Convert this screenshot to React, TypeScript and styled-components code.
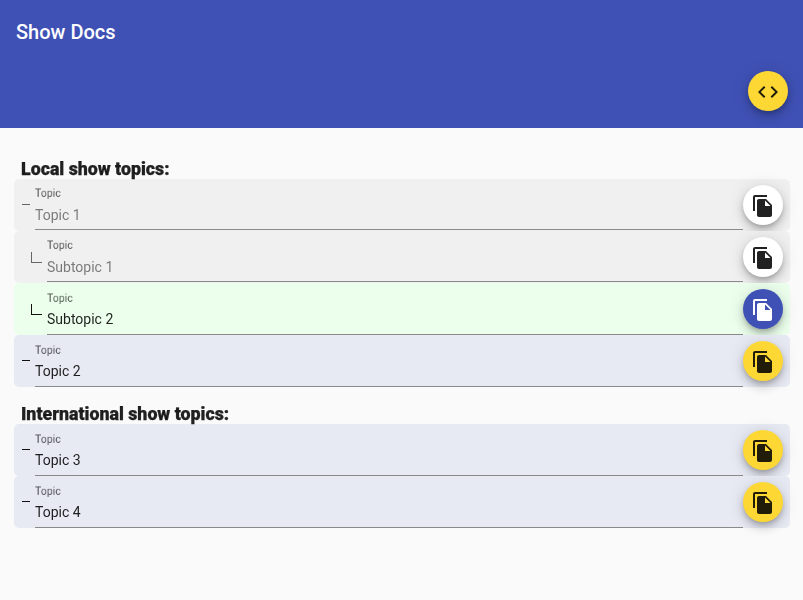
import React from "react";
import styled, { createGlobalStyle } from "styled-components";

type Variant = "disabled" | "active" | "normal";

type Topic = {
  text: string;
  sub?: boolean;
  variant: Variant;
};

const localTopics: Topic[] = [
  { text: "Topic 1", variant: "disabled" },
  { text: "Subtopic 1", sub: true, variant: "disabled" },
  { text: "Subtopic 2", sub: true, variant: "active" },
  { text: "Topic 2", variant: "normal" },
];

const internationalTopics: Topic[] = [
  { text: "Topic 3", variant: "normal" },
  { text: "Topic 4", variant: "normal" },
];

const CopyIcon = () => (
  <svg width="24" height="24" viewBox="0 0 24 24" fill="currentColor">
    <path d="M16 1H4c-1.1 0-2 .9-2 2v14h2V3h12V1zm-1 4l6 6v10c0 1.1-.9 2-2 2H7.99C6.89 23 6 22.1 6 21l.01-14c0-1.1.89-2 1.99-2h7zm-1 7h5.5L14 6.5V12z" />
  </svg>
);

const CodeIcon = () => (
  <svg width="24" height="24" viewBox="0 0 24 24" fill="currentColor">
    <path d="M9.4 16.6L4.8 12l4.6-4.6L8 6l-6 6 6 6 1.4-1.4zm5.2 0l4.6-4.6-4.6-4.6L16 6l6 6-6 6-1.4-1.4z" />
  </svg>
);

const TopicRow = ({ topic }: { topic: Topic }) => (
  <Row $variant={topic.variant}>
    {topic.sub ? <Corner $variant={topic.variant} /> : <Dash $variant={topic.variant} />}
    <Field>
      <FieldLabel>Topic</FieldLabel>
      <FieldValue $variant={topic.variant}>{topic.text}</FieldValue>
    </Field>
    <CopyButton $variant={topic.variant}>
      <CopyIcon />
    </CopyButton>
  </Row>
);

const App = () => {
  return (
    <>
      <GlobalStyle />
      <Header>
        <Title>Show Docs</Title>
        <CodeButton>
          <CodeIcon />
        </CodeButton>
      </Header>
      <Content>
        <SectionTitle>Local show topics:</SectionTitle>
        {localTopics.map((t) => (
          <TopicRow key={t.text} topic={t} />
        ))}
        <SectionTitle>International show topics:</SectionTitle>
        {internationalTopics.map((t) => (
          <TopicRow key={t.text} topic={t} />
        ))}
      </Content>
    </>
  );
};

export default App;

const GlobalStyle = createGlobalStyle`
  html, body {
    margin: 0;
    padding: 0;
    height: 100%;
    background-color: #fafafa;
    font-family: Roboto, "Liberation Sans", sans-serif;
    overflow: hidden;
  }
`;

const Header = styled.header`
  display: flex;
  justify-content: space-between;
  height: 128px;
  padding: 0 15px 0 16px;
  box-sizing: border-box;
  background-color: #3f51b5;
`;

const Title = styled.div`
  font-size: 20px;
  font-weight: 500;
  line-height: 64px;
  color: #fff;
`;

const CodeButton = styled.button`
  display: flex;
  align-items: center;
  justify-content: center;
  align-self: flex-end;
  margin-bottom: 17px;
  width: 40px;
  height: 40px;
  padding: 2px 0 0;
  border: none;
  border-radius: 50%;
  background-color: #fdd835;
  color: rgba(0, 0, 0, 0.87);
  box-shadow: 0 3px 5px -1px rgba(0, 0, 0, 0.2), 0 6px 10px 0 rgba(0, 0, 0, 0.14),
    0 1px 18px 0 rgba(0, 0, 0, 0.12);
`;

const Content = styled.main`
  display: flex;
  flex-direction: column;
  padding: 0 13px 0 14px;
`;

const SectionTitle = styled.h3`
  margin: 0 0 0 7px;
  padding-top: 29.6px;
  font-size: 17.8px;
  font-weight: 900;
  line-height: 21px;
  color: rgba(0, 0, 0, 0.87);
  -webkit-text-stroke: 0.25px rgba(0, 0, 0, 0.87);
  will-change: transform;

  & ~ & {
    padding-top: 15.7px;
  }
`;

const rowColors: Record<Variant, string> = {
  disabled: "#f0f0f0",
  active: "#ecffec",
  normal: "#e7e9f3",
};

const Row = styled.div<{ $variant: Variant }>`
  display: flex;
  align-items: flex-start;
  height: 52.17px;
  padding: 0 7px 0 8px;
  box-sizing: border-box;
  border-radius: 5px;
  background-color: ${(p) => rowColors[p.$variant]};
`;

const Dash = styled.span<{ $variant: Variant }>`
  flex: none;
  width: 8px;
  height: 1px;
  margin: 25px 5px 0 0;
  background-color: ${(p) => (p.$variant === "disabled" ? "#666" : "#111")};
`;

const Corner = styled.span<{ $variant: Variant }>`
  flex: none;
  width: 10px;
  height: 10px;
  margin: 21.2px 5px 0 9px;
  border-left: 1px solid ${(p) => (p.$variant === "disabled" ? "#666" : "#111")};
  border-bottom: 1px solid ${(p) => (p.$variant === "disabled" ? "#666" : "#111")};
`;

const Field = styled.div`
  flex: 1;
  display: flex;
  flex-direction: column;
  height: 51.6px;
  box-sizing: border-box;
  border-bottom: 1px solid #8a8a8a;
`;

const FieldLabel = styled.label`
  height: 12px;
  margin-top: 8.65px;
  font-size: 14px;
  line-height: 16px;
  color: rgba(0, 0, 0, 0.68);
  transform: scale(0.75);
  transform-origin: left top;
  will-change: transform;
`;

const FieldValue = styled.div<{ $variant: Variant }>`
  margin-top: 6.35px;
  font-size: 14px;
  line-height: 18px;
  color: ${(p) => (p.$variant === "disabled" ? "rgba(0, 0, 0, 0.5)" : "rgba(0, 0, 0, 0.87)")};
  will-change: transform;
`;

const buttonColors: Record<Variant, string> = {
  disabled: "#fff",
  active: "#3f51b5",
  normal: "#fdd835",
};

const CopyButton = styled.button<{ $variant: Variant }>`
  flex: none;
  display: flex;
  align-items: center;
  justify-content: center;
  width: 40px;
  height: 40px;
  margin-top: 6px;
  padding: 2px 0 0;
  border: none;
  border-radius: 50%;
  background-color: ${(p) => buttonColors[p.$variant]};
  color: ${(p) => (p.$variant === "active" ? "#fff" : "rgba(0, 0, 0, 0.87)")};
  box-shadow: 0 3px 5px -1px rgba(0, 0, 0, 0.2), 0 6px 10px 0 rgba(0, 0, 0, 0.14),
    0 1px 18px 0 rgba(0, 0, 0, 0.12);
`;
